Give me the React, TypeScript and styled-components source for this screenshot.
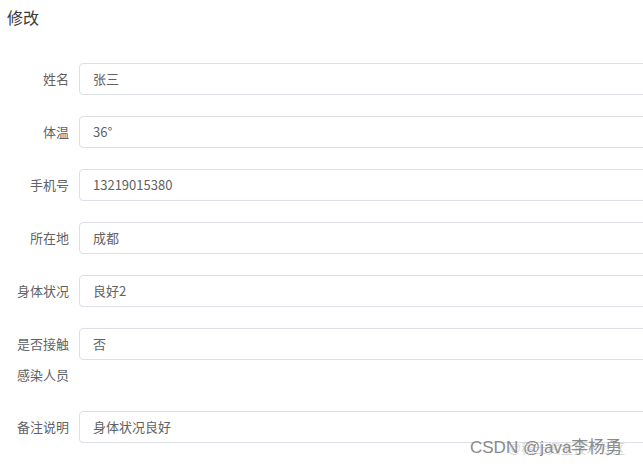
import styled, { createGlobalStyle } from 'styled-components'

const GlobalStyle = createGlobalStyle`
  html, body {
    margin: 0;
    padding: 0;
    background: #fff;
    overflow: hidden;
  }
  body {
    font-family: "Noto Sans CJK SC", "Microsoft YaHei", sans-serif;
  }
`

const fields = [
  { label: '姓名', value: '张三' },
  { label: '体温', value: '36°' },
  { label: '手机号', value: '13219015380' },
  { label: '所在地', value: '成都' },
  { label: '身体状况', value: '良好2' },
  { label: '是否接触感染人员', value: '否' },
  { label: '备注说明', value: '身体状况良好' },
]

const App = () => {
  return (
    <Page>
      <GlobalStyle />
      <Title>修改</Title>
      <Form>
        {fields.map((f) => (
          <FormItem key={f.label}>
            <Label>{f.label}</Label>
            <Input>{f.value}</Input>
          </FormItem>
        ))}
      </Form>
      <Watermark>
        <WatermarkGhost>@稀土掘金技术社区</WatermarkGhost>
        <span>CSDN @java李杨勇</span>
      </Watermark>
    </Page>
  )
}
export default App

const Page = styled.div`
  position: relative;
  width: 643px;
  height: 467px;
  overflow: hidden;
  padding: 5px 0 0 7px;
  box-sizing: border-box;
`

const Title = styled.div`
  font-size: 16px;
  line-height: 24px;
  color: #3a3a3a;
`

const Form = styled.div`
  width: 760px;
  margin-top: 34px;
  margin-left: -7px;
  display: flex;
  flex-direction: column;
  gap: 21px;
`

const FormItem = styled.div`
  display: flex;
  align-items: flex-start;
`

const Label = styled.div`
  width: 79px;
  flex-shrink: 0;
  padding: 0 10px 0 11px;
  box-sizing: border-box;
  text-align: right;
  font-size: 13px;
  line-height: 31px;
  color: #606266;
`

const Input = styled.div`
  flex: 1;
  height: 32px;
  box-sizing: border-box;
  border: 1px solid #dcdfe6;
  border-radius: 4px;
  padding: 0 13px;
  font-size: 13px;
  line-height: 30px;
  color: #606266;
  background: #fff;
`

const Watermark = styled.div`
  position: absolute;
  left: 470px;
  top: 436px;
  font-size: 17px;
  line-height: 24px;
  color: #8a8a8a;
  font-family: "Liberation Sans", "Noto Sans CJK SC", sans-serif;
  white-space: nowrap;
`

const WatermarkGhost = styled.span`
  position: absolute;
  left: 38px;
  top: 1px;
  font-size: 13px;
  color: rgba(150, 150, 150, 0.4);
`
